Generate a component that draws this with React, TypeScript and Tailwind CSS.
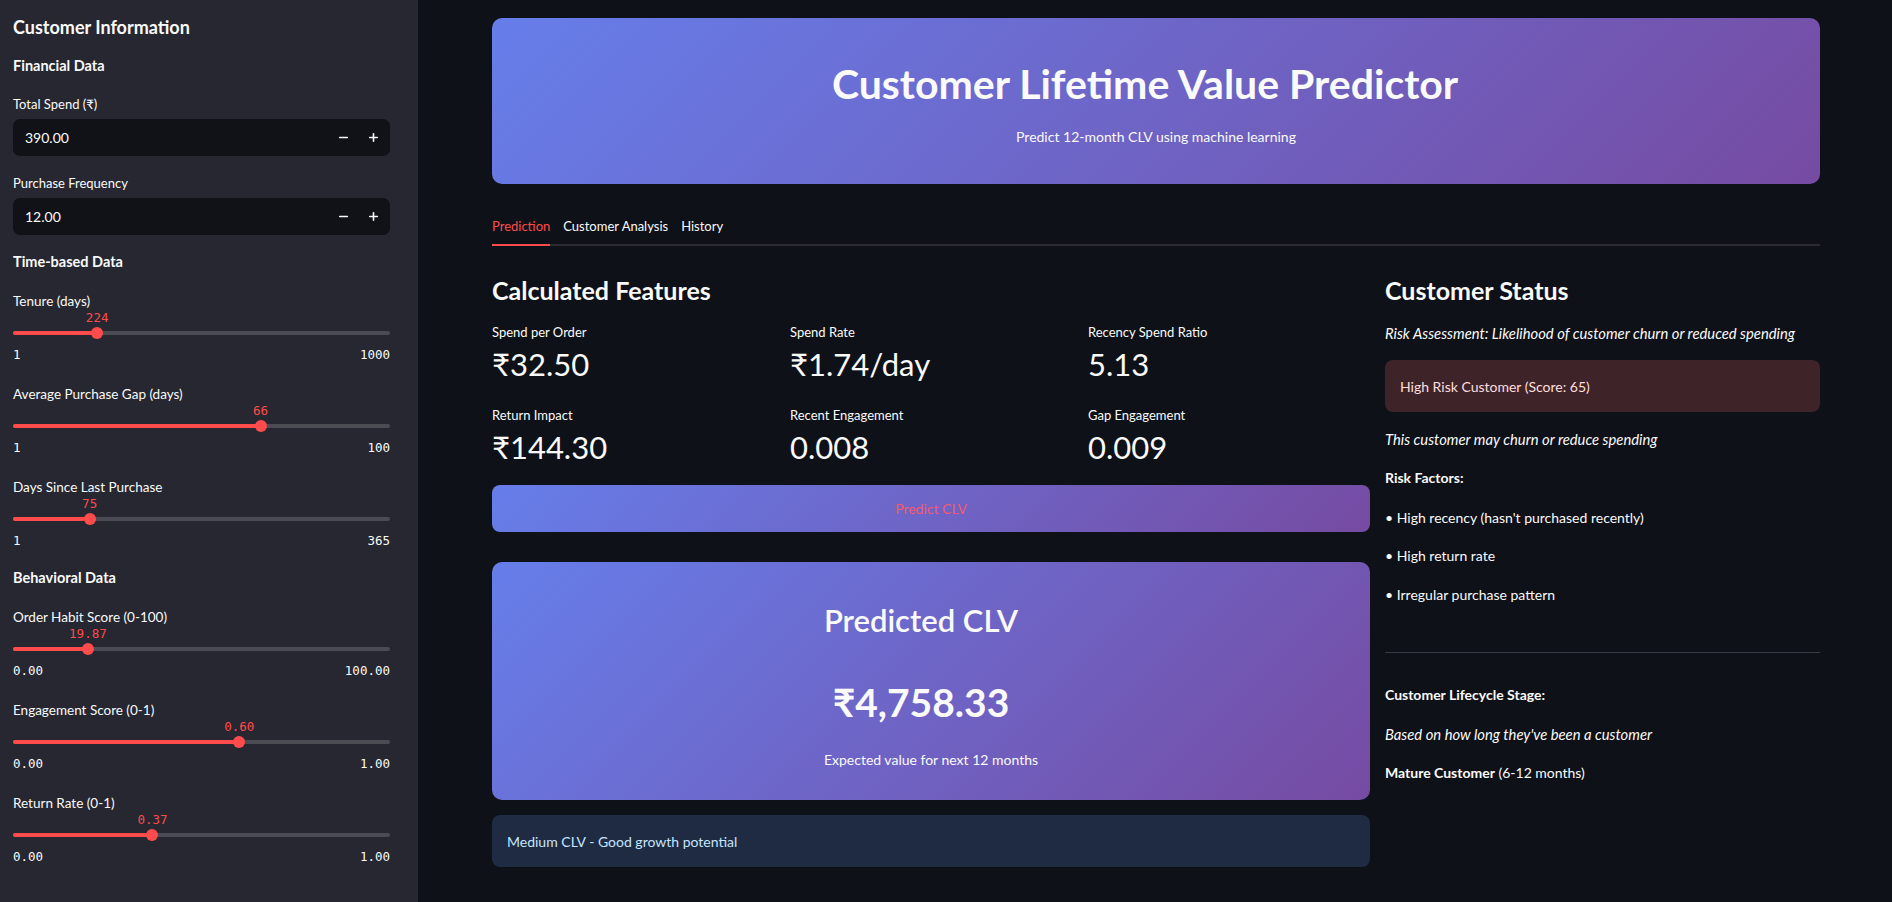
import { Minus, Plus } from "lucide-react"

const font = { fontFamily: "Lato, 'Noto Sans', 'DejaVu Sans', sans-serif" }
const mono = { fontFamily: "'DejaVu Sans Mono', 'Liberation Mono', monospace" }

function NumberInput({ label, value }: { label: string; value: string }) {
  return (
    <div className="mt-[17px] first:mt-0">
      <div className="h-[20px] text-[13px] leading-[20px]">{label}</div>
      <div className="mt-[5px] flex h-[37px] items-center rounded-[7px] bg-[#111218] pl-[12px] pr-[10px]">
        <span className="flex-1 text-[14px]">{value}</span>
        <Minus className="h-[13px] w-[13px]" strokeWidth={3} />
        <Plus className="ml-[17px] h-[13px] w-[13px]" strokeWidth={3} />
      </div>
    </div>
  )
}

function Slider({ label, value, min, max, pct }: { label: string; value: string; min: string; max: string; pct: number }) {
  return (
    <div className="mt-[17px]">
      <div className="h-[20px] pt-[2px] text-[13.5px] leading-[20px]">{label}</div>
      <div className="relative h-[16px]">
        <span
          className="absolute top-[1px] -translate-x-1/2 text-[12.5px] leading-[16px] text-[#ff4b4b]"
          style={{ ...mono, left: `${pct}%` }}
        >
          {value}
        </span>
      </div>
      <div className="relative flex h-[16px] items-center">
        <div className="h-[4px] w-full rounded-full bg-[#4a4b53]">
          <div className="h-full rounded-full bg-[#ff4b4b]" style={{ width: `${pct}%` }} />
        </div>
        <div
          className="absolute top-1/2 h-[12px] w-[12px] -translate-x-1/2 -translate-y-1/2 rounded-full bg-[#ff4b4b]"
          style={{ left: `${pct}%` }}
        />
      </div>
      <div className="mt-[4px] flex h-[20px] items-center justify-between text-[12.5px]" style={mono}>
        <span>{min}</span>
        <span>{max}</span>
      </div>
    </div>
  )
}

function Metric({ label, value }: { label: string; value: string }) {
  return (
    <div>
      <div className="h-[20px] text-[13px] leading-[20px]">{label}</div>
      <div className="h-[44px] text-[31px] leading-[44px]">{value}</div>
    </div>
  )
}

export default function App() {
  return (
    <div className="flex min-h-screen bg-[#0e1117] text-[#fafafa]" style={font}>
      <aside className="w-[418px] shrink-0 bg-[#262730] pb-[40px] pl-[13px] pr-[28px] pt-[13px]">
        <h2 className="h-[28px] text-[18px] font-bold leading-[28px]">Customer Information</h2>
        <h3 className="mt-[15px] h-[20px] text-[14.5px] font-bold leading-[20px]">Financial Data</h3>
        <div className="mt-[18px]">
          <NumberInput label="Total Spend (₹)" value="390.00" />
          <NumberInput label="Purchase Frequency" value="12.00" />
        </div>
        <h3 className="mt-[17px] h-[20px] text-[14.5px] font-bold leading-[20px]">Time-based Data</h3>
        <div className="mt-[2px]">
          <Slider label="Tenure (days)" value="224" min="1" max="1000" pct={22.32} />
          <Slider label="Average Purchase Gap (days)" value="66" min="1" max="100" pct={65.66} />
          <Slider label="Days Since Last Purchase" value="75" min="1" max="365" pct={20.33} />
        </div>
        <h3 className="mt-[17px] h-[20px] text-[14.5px] font-bold leading-[20px]">Behavioral Data</h3>
        <div className="mt-[3px]">
          <Slider label="Order Habit Score (0-100)" value="19.87" min="0.00" max="100.00" pct={19.87} />
          <Slider label="Engagement Score (0-1)" value="0.60" min="0.00" max="1.00" pct={60} />
          <Slider label="Return Rate (0-1)" value="0.37" min="0.00" max="1.00" pct={37} />
        </div>
      </aside>

      <main className="min-w-0 flex-1 pb-[30px] pl-[74px] pr-[72px] pt-[18px]">
        <section className="flex h-[166px] flex-col items-center rounded-[10px] bg-[linear-gradient(135deg,#667eea_0%,#764ba2_100%)] pt-[41px]">
          <h1 className="pr-[22px] text-[41px] font-bold leading-[50px]">Customer Lifetime Value Predictor</h1>
          <p className="mt-[18px] text-[14px] leading-[20px]">Predict 12-month CLV using machine learning</p>
        </section>

        <nav className="mt-[32px] flex gap-[13px] border-b-2 border-[#2a2b33] text-[13px]">
          <div className="-mb-[2px] border-b-2 border-[#ff4b4b] pb-[8px] leading-[20px] text-[#ff4b4b]">Prediction</div>
          <div className="pb-[8px] leading-[20px]">Customer Analysis</div>
          <div className="pb-[8px] leading-[20px]">History</div>
        </nav>

        <div className="mt-[26px] flex gap-[15px]">
          <div className="w-[878px] shrink-0">
            <h2 className="h-[36px] text-[25px] font-bold leading-[36px]">Calculated Features</h2>
            <div className="mt-[14px] grid grid-cols-3 gap-x-[16px] gap-y-[19px]">
              <Metric label="Spend per Order" value="₹32.50" />
              <Metric label="Spend Rate" value="₹1.74/day" />
              <Metric label="Recency Spend Ratio" value="5.13" />
              <Metric label="Return Impact" value="₹144.30" />
              <Metric label="Recent Engagement" value="0.008" />
              <Metric label="Gap Engagement" value="0.009" />
            </div>
            <button className="mt-[16px] flex h-[47px] w-full items-center justify-center rounded-[8px] bg-[linear-gradient(135deg,#667eea_0%,#764ba2_100%)] text-[14px] text-[#f55a6e]">
              Predict CLV
            </button>
            <div className="mt-[30px] flex h-[238px] flex-col items-center rounded-[10px] bg-[linear-gradient(135deg,#667eea_0%,#764ba2_100%)] pt-[38px]">
              <div className="pr-[20px] text-[31px] font-semibold leading-[40px]">Predicted CLV</div>
              <div className="mt-[40px] pr-[20px] text-[39px] font-bold leading-[44px]">₹4,758.33</div>
              <div className="mt-[26px] text-[14px] leading-[20px]">Expected value for next 12 months</div>
            </div>
            <div className="mt-[15px] flex h-[52px] items-center rounded-[8px] bg-[#1e2b42] px-[15px] text-[14px] text-[#c7e5ff]">
              Medium CLV - Good growth potential
            </div>
          </div>

          <div className="min-w-0 flex-1">
            <h2 className="h-[36px] text-[25px] font-bold leading-[36px]">Customer Status</h2>
            <p className="mt-[15px] text-[14.8px] italic leading-[20px]">Risk Assessment: Likelihood of customer churn or reduced spending</p>
            <div className="mt-[17px] flex h-[52px] items-center rounded-[8px] bg-[#3e2428] px-[15px] text-[14px] text-[#ffdede]">
              High Risk Customer (Score: 65)
            </div>
            <p className="mt-[17px] text-[14.8px] italic leading-[20px]">This customer may churn or reduce spending</p>
            <p className="mt-[19px] text-[14px] font-bold leading-[20px]">Risk Factors:</p>
            <p className="mt-[20px] text-[14px] leading-[20px]">• High recency (hasn't purchased recently)</p>
            <p className="mt-[18px] text-[14px] leading-[20px]">• High return rate</p>
            <p className="mt-[19px] text-[14px] leading-[20px]">• Irregular purchase pattern</p>
            <hr className="mt-[47px] border-t border-[#3a3b44]" />
            <p className="mt-[32px] text-[14px] font-bold leading-[20px]">Customer Lifecycle Stage:</p>
            <p className="mt-[19px] text-[14.8px] italic leading-[20px]">Based on how long they've been a customer</p>
            <p className="mt-[19px] text-[14px] leading-[20px]">
              <span className="font-bold">Mature Customer</span> (6-12 months)
            </p>
          </div>
        </div>
      </main>
    </div>
  )
}
